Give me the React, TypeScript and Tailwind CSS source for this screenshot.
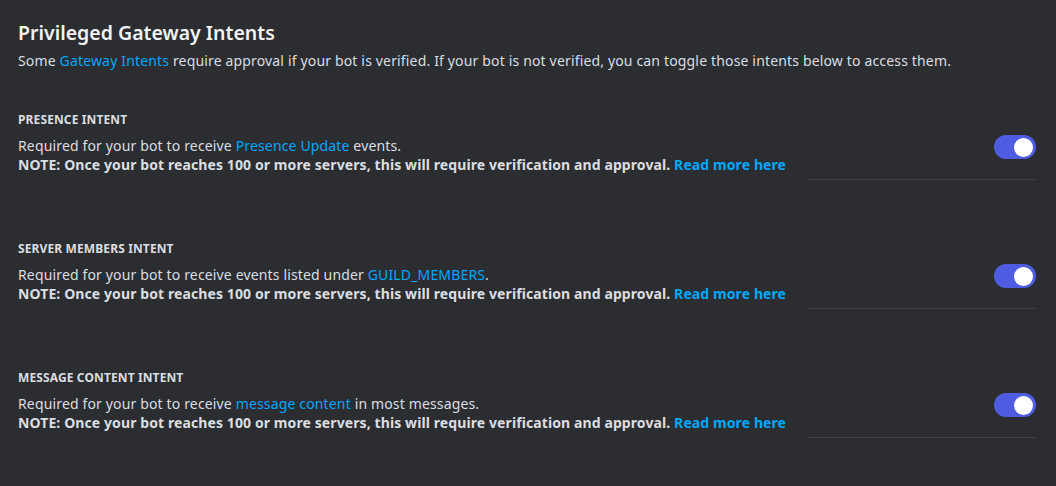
import React from "react";

const font = { fontFamily: '"Noto Sans", "Open Sans", sans-serif' };

function Toggle() {
  return (
    <div className="w-[42px] h-[24px] rounded-full bg-[#4f5ce2] flex items-center justify-end px-[3px] -mt-[1px]">
      <div className="w-[19px] h-[19px] rounded-full bg-white" />
    </div>
  );
}

function Section({ label, children }: { label: string; children: React.ReactNode }) {
  return (
    <div className="mt-[61px] first:mt-0">
      <div className="text-[12px] leading-[16px] font-bold uppercase text-[#dbdee1] tracking-[0.01em]">{label}</div>
      <div className="flex mt-[8px]">
        <div className="flex-1 text-[14px] leading-[19px] text-[#dbdee1] tracking-[0.15px]">
          {children}
          <div className="font-bold tracking-[0.1px]">
            NOTE: Once your bot reaches 100 or more servers, this will require verification and approval.{" "}
            <span className="text-[#00a8fc]">Read more here</span>
          </div>
        </div>
        <div className="w-[229px] border-b border-[#3f4147] flex justify-end items-start pb-[20px]">
          <Toggle />
        </div>
      </div>
    </div>
  );
}

export default function App() {
  return (
    <div className="w-[1056px] h-[486px] bg-[#2b2d31] pl-[18px] pr-[20px] pt-[21px]" style={font}>
      <h1 className="text-[19.5px] leading-[24px] font-semibold text-[#f2f3f5]">Privileged Gateway Intents</h1>
      <p className="mt-[6px] text-[14px] leading-[20px] text-[#dbdee1] tracking-[0.16px]">
        Some <span className="text-[#00a8fc]">Gateway Intents</span> require approval if your bot is verified. If your bot is not verified, you can toggle those intents below to access them.
      </p>
      <div className="mt-[41px] flex flex-col">
        <Section label="Presence Intent">
          <div>
            Required for your bot to receive <span className="text-[#00a8fc]">Presence Update</span> events.
          </div>
        </Section>
        <Section label="Server Members Intent">
          <div>
            Required for your bot to receive events listed under <span className="text-[#00a8fc]">GUILD_MEMBERS</span>.
          </div>
        </Section>
        <Section label="Message Content Intent">
          <div>
            Required for your bot to receive <span className="text-[#00a8fc]">message content</span> in most messages.
          </div>
        </Section>
      </div>
    </div>
  );
}
